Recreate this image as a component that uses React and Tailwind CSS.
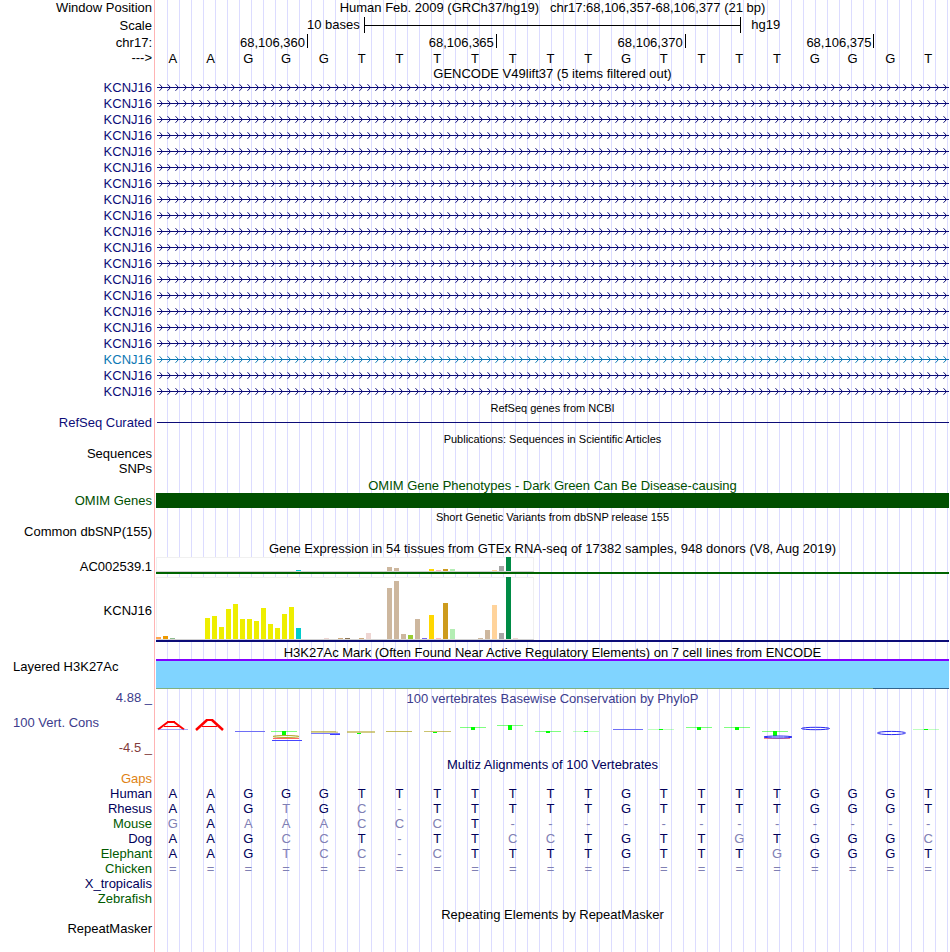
import React from "react";

const HUMAN = "AAGGGTTTTTTTGTTTTGGGT";

const species = [
  { name: "Gaps", color: "text-[#e08214]", seq: "" },
  { name: "Human", color: "text-[#00005a]", seq: HUMAN },
  { name: "Rhesus", color: "text-[#00005a]", seq: "AAGTGC-TTTTTGTTTTGGGT" },
  { name: "Mouse", color: "text-[#005a00]", seq: "GAAAACCCT------------" },
  { name: "Dog", color: "text-[#00005a]", seq: "AAGCCT-TTCCTGTTGTGGGC" },
  { name: "Elephant", color: "text-[#005a00]", seq: "AAGTCC-CTTTTGTTTGGGGT" },
  { name: "Chicken", color: "text-[#005a00]", seq: "=====================" },
  { name: "X_tropicalis", color: "text-[#00005a]", seq: "" },
  { name: "Zebrafish", color: "text-[#005a00]", seq: "" },
];

// 20 transcripts, the 18th one is drawn in the lighter blue
const transcripts = Array.from({ length: 20 }, (_, i) => (i === 17 ? "light" : "dark"));

// [tissue index, bar height, color]
const ac002539 = [
  [20, 1, "#00cdcd"], [33, 4, "#cdb79e"], [34, 3, "#cdb79e"], [39, 2, "#ffd700"],
  [40, 1, "#ffb6c1"], [41, 2, "#cd9b1d"], [42, 2, "#b4eeb4"], [48, 1, "#ffd39b"],
  [49, 5, "#a6a6a6"], [50, 14, "#008b45"],
];

const kcnj16 = [
  [0, 2, "#ffa54f"], [1, 3, "#ee9a00"], [2, 1, "#8fbc8f"],
  [7, 21, "#eeee00"], [8, 23, "#eeee00"], [9, 12, "#eeee00"], [10, 30, "#eeee00"],
  [11, 35, "#eeee00"], [12, 20, "#eeee00"], [13, 20, "#eeee00"], [14, 18, "#eeee00"],
  [15, 31, "#eeee00"], [16, 15, "#eeee00"], [17, 11, "#eeee00"], [18, 25, "#eeee00"],
  [19, 32, "#eeee00"], [20, 11, "#00cdcd"], [24, 1, "#eed5d2"], [26, 1, "#cdaa7d"],
  [27, 1, "#8b7355"], [29, 1, "#cdaa7d"], [30, 6, "#eed5d2"], [33, 51, "#cdb79e"],
  [34, 58, "#cdb79e"], [35, 5, "#cdb79e"], [36, 4, "#9acd32"], [37, 20, "#cdb79e"],
  [38, 1, "#7a67ee"], [39, 24, "#ffd700"], [40, 1, "#ffb6c1"], [41, 36, "#cd9b1d"],
  [42, 10, "#b4eeb4"], [46, 1, "#cdb79e"], [47, 9, "#cdb79e"], [48, 34, "#ffd39b"],
  [49, 6, "#a6a6a6"], [50, 62, "#008b45"], [51, 1, "#eed5d2"],
];

// thin cross bar + stem marks of the conservation logo: [x, y, stem height, faint]
const stems = [
  [115, 16, 4], [304, 12, 3], [341, 10, 5], [379, 16, 2], [417, 16, 1, true],
  [492, 14, 1, true], [530, 12, 3], [568, 12, 3], [606, 16, 5], [757, 14, 1, true],
];

const Row = ({ label, color = "text-black", height = "h-4", children }) => (
  <div className={`flex items-stretch ${height}`}>
    <div className={`flex w-[154px] shrink-0 items-center justify-end pr-0.5 whitespace-nowrap ${color}`}>
      {label}
    </div>
    <div className="min-w-0 flex-1">{children}</div>
  </div>
);

const Title = ({ children, color = "text-black", size = "text-[13px]", height = "h-4" }) => (
  <div className={`flex items-center justify-center pl-[156px] whitespace-pre ${height} ${size} ${color}`}>
    {children}
  </div>
);

const Bases = ({ seq, compare }) => (
  <div className="mr-0.5 grid h-full grid-cols-[repeat(21,minmax(0,1fr))] items-center text-center">
    {seq.split("").map((base, i) => (
      <span
        key={i}
        className={!compare ? "text-black" : base === HUMAN[i] ? "text-[#00005a]" : "text-[#8080b4]"}
      >
        {base}
      </span>
    ))}
  </div>
);

const Transcript = ({ tone }) => {
  const stroke = tone === "light" ? "#0c78b4" : "#0c0c78";
  return (
    <svg className="block h-4 w-full" aria-hidden="true">
      <defs>
        <pattern id={`arrow-${tone}`} x="3" width="8" height="16" patternUnits="userSpaceOnUse">
          <path d="M2.5 4.2 L5.5 7.5 L2.5 10.8" fill="none" stroke={stroke} strokeWidth="1" />
        </pattern>
      </defs>
      <rect x="3" y="7" width="100%" height="1" fill={stroke} />
      <rect x="3" width="100%" height="16" fill={`url(#arrow-${tone})`} />
    </svg>
  );
};

const TissueChart = ({ bars, height, base, line }) => (
  <div className="pl-0.5">
    <svg className="block w-full" height={height} shapeRendering="crispEdges" aria-hidden="true">
      <rect width="378" height={base + 1} fill="#f0f0f0" />
      <rect x="1" y="1" width="376" height={base - 1} fill="#fff" />
      <rect y={base} width="378" height="1" fill="#d2d2d2" />
      {bars.map(([i, h, color]) => (
        <rect key={i} x={i * 7} y={base - h} width="5" height={h} fill={color} />
      ))}
      <rect y={base + 1} width="100%" height="2" fill={line} />
    </svg>
  </div>
);

const ConservationLogo = () => (
  <svg className="block h-[30px] w-full" viewBox="0 0 793 30" preserveAspectRatio="none" aria-hidden="true">
    <g stroke="#f00" fill="none">
      <line x1="2" y1="14.5" x2="12" y2="7" strokeWidth="2" />
      <line x1="11" y1="7" x2="19" y2="7" strokeWidth="2" />
      <line x1="18" y1="7" x2="28" y2="14.5" strokeWidth="2" />
      <line x1="8" y1="11.5" x2="23" y2="11.5" />
      <line x1="40" y1="15" x2="51" y2="5" strokeWidth="2.5" />
      <line x1="50" y1="5" x2="57" y2="5" strokeWidth="2" />
      <line x1="56" y1="5" x2="67" y2="15" strokeWidth="2.5" />
      <line x1="46" y1="11.5" x2="61" y2="11.5" />
    </g>
    <g stroke="#6e6ef5" fill="none">
      <line x1="2" y1="14.5" x2="32" y2="14.5" opacity="0.6" />
      <line x1="79" y1="16.5" x2="109" y2="16.5" />
      <line x1="457" y1="14.5" x2="487" y2="14.5" />
    </g>
    <g stroke="#b4aa32" fill="none">
      <ellipse cx="130" cy="21.5" rx="13" ry="1" />
      <line x1="155" y1="17.5" x2="182" y2="17.5" strokeWidth="2" opacity="0.5" />
      <line x1="155" y1="16.5" x2="180" y2="16.5" opacity="0.6" />
      <line x1="191" y1="17" x2="219" y2="17" strokeWidth="2" opacity="0.6" />
      <line x1="230" y1="16.5" x2="256" y2="16.5" opacity="0.8" />
      <line x1="268" y1="16.5" x2="295" y2="16.5" opacity="0.7" />
    </g>
    <line x1="117" y1="23.5" x2="143" y2="23.5" stroke="#f66" />
    <line x1="116" y1="25.5" x2="146" y2="25.5" stroke="#4646ff" />
    <line x1="155" y1="18.5" x2="184" y2="18.5" stroke="#7878ff" />
    <line x1="174" y1="19.5" x2="184" y2="19.5" stroke="#3c3cff" />
    <rect x="201" y="18" width="4" height="1" fill="#0f0" />
    <rect x="277" y="17" width="4" height="1" fill="#0f0" />
    {stems.map(([x, y, h, faint]) => (
      <g key={x} fill="#00ff00">
        <rect x={x} y={y} width="26" height="1" opacity={faint ? 0.25 : 0.5} />
        <rect x={x + 11} y={y} width="4" height={h} />
      </g>
    ))}
    <line x1="608" y1="23.5" x2="634" y2="23.5" stroke="#f66" opacity="0.8" />
    <g fill="none" stroke="#2828f0">
      <ellipse cx="622" cy="22" rx="14" ry="1" />
      <ellipse cx="659.5" cy="13.5" rx="14" ry="1.2" />
      <ellipse cx="735.5" cy="18" rx="14" ry="1.6" />
    </g>
  </svg>
);

const Ruler = () => (
  <div className="grid h-4 grid-cols-[4fr_5fr_5fr_5fr_2fr] pl-0.5">
    {["68,106,360", "68,106,365", "68,106,370", "68,106,375"].map((pos) => (
      <span key={pos} className="-mr-px h-3.5 border-r border-black pr-0.5 text-right leading-[18px]">
        {pos}
      </span>
    ))}
  </div>
);

const ScaleBar = () => (
  <div className="grid h-4 grid-cols-[11fr_20fr_11fr] items-center pl-0.5 whitespace-nowrap">
    <span className="pr-1 text-right">10 bases</span>
    <span className="flex h-4 items-center border-x border-black">
      <span className="h-px w-full bg-black" />
    </span>
    <span className="pl-2.5">hg19</span>
  </div>
);

export default function App() {
  return (
    <main className="min-h-screen bg-white bg-[linear-gradient(to_right,#fff_154px,#ffb4b4_154px,#ffb4b4_155px,#fff_155px,#fff_160px,transparent_160px),repeating-linear-gradient(to_right,transparent_0px,transparent_11px,#dcdcff_11px,#dcdcff_12px)] pr-px font-['Liberation_Sans',Arial,sans-serif] text-[13px] leading-4 text-black">
      <div className="flex h-[17px]">
        <div className="w-[154px] shrink-0 pr-0.5 text-right">Window Position</div>
        <div className="flex-1 pl-0.5 text-center whitespace-pre">
          {"Human Feb. 2009 (GRCh37/hg19)   chr17:68,106,357-68,106,377 (21 bp)"}
        </div>
      </div>
      <Row label="Scale" height="h-[17px]">
        <ScaleBar />
      </Row>
      <Row label="chr17:" height="h-[17px]">
        <Ruler />
      </Row>
      <Row label="--->" height="h-3.5">
        <Bases seq={HUMAN} />
      </Row>

      <Title height="h-[17px]">GENCODE V49lift37 (5 items filtered out)</Title>
      <div className="-mt-0.5">
        {transcripts.map((tone, i) => (
          <Row key={i} label="KCNJ16" color={tone === "light" ? "text-[#0c78b4]" : "text-[#0c0c78]"}>
            <Transcript tone={tone} />
          </Row>
        ))}
      </div>

      <Title size="text-[11px]">RefSeq genes from NCBI</Title>
      <Row label="RefSeq Curated" color="text-[#0c0c78]" height="h-[13px]">
        <div className="ml-[3px] flex h-[13px] items-center">
          <div className="h-px w-full bg-[#0c0c78]" />
        </div>
      </Row>

      <Title size="text-[11px]" height="h-[19px]">Publications: Sequences in Scientific Articles</Title>
      <Row label="Sequences" height="h-3" />
      <Row label="SNPs" height="h-[18px]" />

      <Title color="text-[#005000]" height="h-[15px] pt-px">
        OMIM Gene Phenotypes - Dark Green Can Be Disease-causing
      </Title>
      <Row label="OMIM Genes" color="text-[#005000]" height="h-[15px]">
        <div className="ml-0.5 h-full bg-[#005000]" />
      </Row>

      <Title size="text-[11px]" height="h-[18px]">Short Genetic Variants from dbSNP release 155</Title>
      <Row label="Common dbSNP(155)" height="h-3" />

      <Title height="h-[19px] pt-0.5">
        Gene Expression in 54 tissues from GTEx RNA-seq of 17382 samples, 948 donors (V8, Aug 2019)
      </Title>
      <Row label="AC002539.1" height="h-5">
        <TissueChart bars={ac002539} height={17} base={14} line="#006400" />
      </Row>
      <Row label="KCNJ16" height="h-[68px]">
        <TissueChart bars={kcnj16} height={65} base={62} line="#0c0c78" />
      </Row>

      <Title height="h-3.5 pt-px">
        H3K27Ac Mark (Often Found Near Active Regulatory Elements) on 7 cell lines from ENCODE
      </Title>
      <div className="flex h-[30px]">
        <div className="w-[154px] shrink-0 pl-[13px]">Layered H3K27Ac</div>
        <div className="ml-0.5 flex flex-1 flex-col">
          <div className="h-0.5 bg-[#8000ff]" />
          <div className="flex-1 bg-[#80d4ff]" />
          <div className="flex h-px">
            <div className="grow-[19] bg-[#80b080]" />
            <div className="grow-[2] bg-[#32648c]" />
          </div>
        </div>
      </div>

      <div className="flex h-[69px]">
        <div className="flex w-[154px] shrink-0 flex-col justify-between pt-px pr-0.5 pb-0.5 text-right text-[#3c3c8c]">
          <span>4.88 _</span>
          <span className="pl-[13px] text-left">100 Vert. Cons</span>
          <span className="text-[#823c3c]">-4.5 _</span>
        </div>
        <div className="flex-1 pl-0.5">
          <div className="h-[26px] pt-0.5 text-center text-[#3c3c8c]">
            100 vertebrates Basewise Conservation by PhyloP
          </div>
          <ConservationLogo />
        </div>
      </div>

      <Title color="text-[#00005a]" height="h-[13px]">Multiz Alignments of 100 Vertebrates</Title>
      {species.map(({ name, color, seq }) => (
        <Row key={name} label={name} color={color} height="h-[15px]">
          <Bases seq={seq} compare />
        </Row>
      ))}

      <Title height="h-[17px]">Repeating Elements by RepeatMasker</Title>
      <Row label="RepeatMasker" height="h-3" />
    </main>
  );
}
